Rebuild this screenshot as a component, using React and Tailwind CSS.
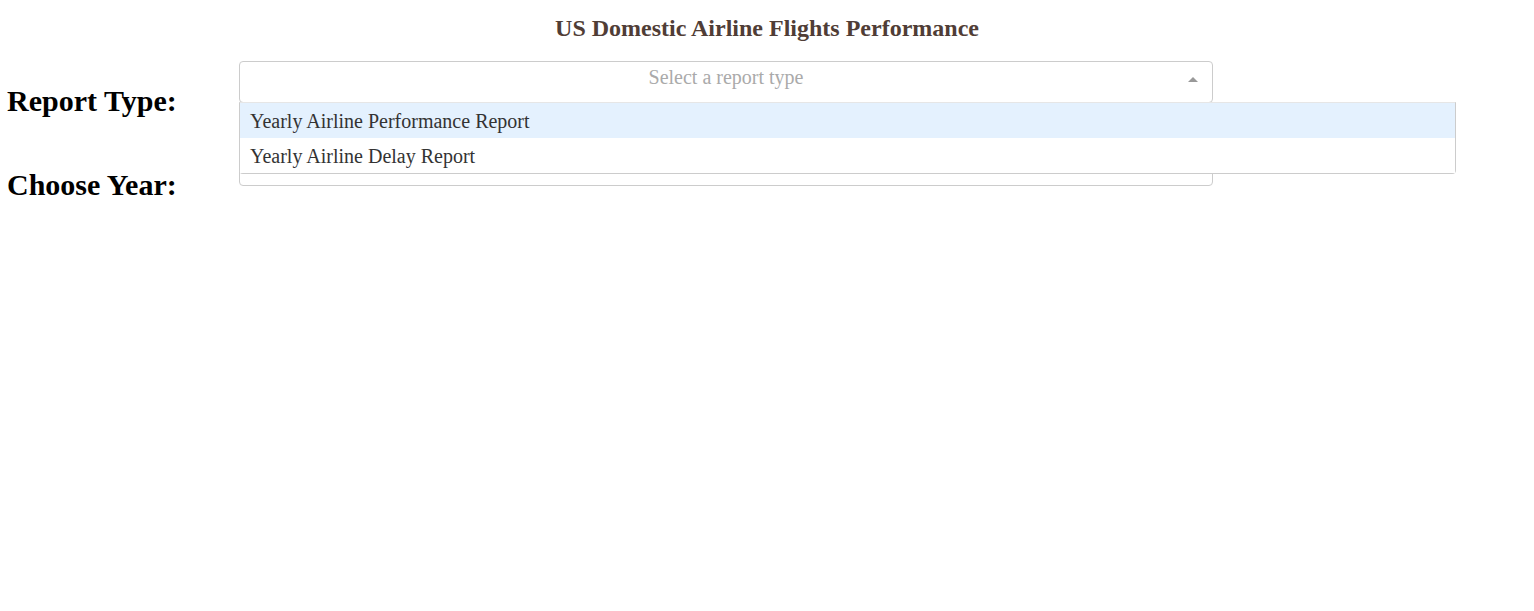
import React from "react";

const options = ["Yearly Airline Performance Report", "Yearly Airline Delay Report"];

function Arrow({ up }) {
  return (
    <svg width="10" height="5" viewBox="0 0 10 5" className="block">
      <polygon points={up ? "0,5 5,0 10,5" : "0,0 10,0 5,5"} fill="#999" />
    </svg>
  );
}

function Dropdown({ placeholder, open }) {
  return (
    <div className={`relative w-[974px] ${open ? "z-10" : "z-0"}`}>
      <div className="relative h-[42px] rounded-[4px] border border-[#ccc] bg-white">
        <div className="pt-[4px] text-center text-[20px] leading-[23px] text-[#aaa]">{placeholder}</div>
        <div className="absolute right-[14px] top-[15px]">
          <Arrow up={open} />
        </div>
      </div>
      {open && (
        <div className="absolute left-0 top-[41px] w-[1217px] rounded-b-[4px] border border-[#ccc] border-t-[#e6e6e6] bg-white">
          {options.map((o, i) => (
            <div
              key={o}
              className={`flex h-[35px] items-center pl-[10px] text-[20px] text-[#333] ${
                i === 0 ? "bg-[#e4f1fe]" : "bg-white"
              }`}
            >
              {o}
            </div>
          ))}
        </div>
      )}
    </div>
  );
}

export default function App() {
  return (
    <div className="min-h-[611px] bg-white pt-[14px] font-['Liberation_Serif',serif]">
      <h1 className="h-[28px] text-center text-[24px] font-bold leading-[28px] text-[#503D36]">
        US Domestic Airline Flights Performance
      </h1>

      {/* Report type row */}
      <div className="relative z-10 mt-[19px] flex h-[83px] items-start">
        <h2 className="w-[239px] shrink-0 pl-[7px] pt-[23px] text-[30px] font-bold leading-[33px] text-black">
          Report Type:
        </h2>
        <Dropdown placeholder="Select a report type" open />
      </div>

      {/* Year row */}
      <div className="relative z-0 flex items-start">
        <h2 className="w-[239px] shrink-0 pl-[7px] pt-[24px] text-[30px] font-bold leading-[33px] text-black">
          Choose Year:
        </h2>
        <Dropdown placeholder="Select a year" />
      </div>
    </div>
  );
}
